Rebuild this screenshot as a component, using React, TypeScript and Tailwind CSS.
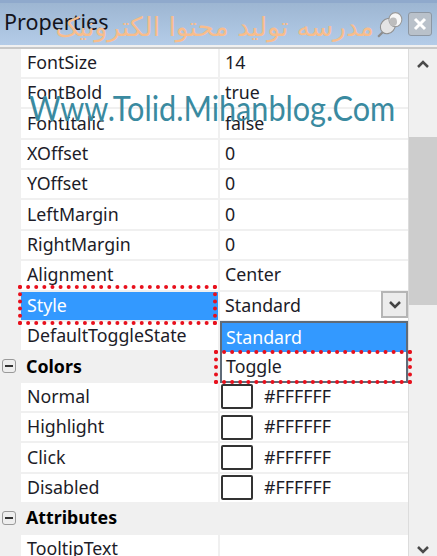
const rowText = "text-[17.8px] text-[#1c1c28] leading-none";

type Row = {
  name: string;
  value?: string;
  swatch?: boolean;
  selected?: boolean;
};

function Cells({ name, value, swatch, selected }: Row) {
  return (
    <div className="flex h-[30.375px] pl-[21px]">
      <div
        className={`flex w-[197px] items-center border-b-2 border-[#f0f0f0] pl-[6px] ${
          selected ? "bg-[#3399ff] text-white" : "bg-white text-[#1c1c28]"
        } text-[17.8px] leading-none`}
      >
        {name}
      </div>
      <div className={`flex flex-1 items-center border-b-2 border-l-2 border-[#f0f0f0] bg-white ${rowText}`}>
        {swatch ? (
          <>
            <span className="ml-[1px] h-[25px] w-[32px] rounded-[2px] border-2 border-[#333333] bg-white" />
            <span className="ml-[11px]">{value}</span>
          </>
        ) : (
          <span className="pl-[5px]">{value}</span>
        )}
      </div>
    </div>
  );
}

function Group({ name }: { name: string }) {
  return (
    <div className="flex h-[30.375px] items-center bg-[#f0f0f0] pb-[2px]">
      <span className="ml-[2px] flex h-[14px] w-[14px] items-center justify-center rounded-[3px] border border-[#9a9a9a] bg-[#eeeeee]">
        <span className="h-[2px] w-[8px] bg-[#333333]" />
      </span>
      <span className="ml-[10px] text-[17.8px] font-bold leading-none text-black">{name}</span>
    </div>
  );
}

function PinIcon() {
  return (
    <svg width="30" height="28" viewBox="0 0 26 26" className="mt-[1px]">
      <path d="M2 24 L9 17" stroke="#8c8c8c" strokeWidth="2" />
      <ellipse cx="11" cy="14" rx="6.5" ry="7.5" transform="rotate(40 11 14)" fill="#e4e4e4" stroke="#8f8f8f" />
      <ellipse cx="18" cy="8" rx="6" ry="6.5" fill="#f7f7f7" stroke="#9a9a9a" />
      <ellipse cx="16" cy="10" rx="3.5" ry="4" fill="#bdbdbd" />
    </svg>
  );
}

export default function App() {
  return (
    <div
      className="relative h-[556px] w-[437px] overflow-hidden bg-[#f0f0f0]"
      style={{ fontFamily: '"Noto Sans", "DejaVu Sans", sans-serif' }}
    >
      <div className="flex h-[45px] items-center border-t-[3px] border-[#8fa9cc] bg-gradient-to-b from-[#9db6d2] to-[#b4cce8] pl-[4px] pr-[5px]">
        <span className="flex-1 pb-[4px] text-[21.5px] leading-none text-[#14141c]">Properties</span>
        <PinIcon />
        <span className="ml-[3px] flex h-[24px] w-[24px] items-center justify-center rounded-[3px] border border-[#8d97a3] bg-[#b9c1ca]">
          <svg width="14" height="14" viewBox="0 0 14 14">
            <path d="M2 2 L12 12 M12 2 L2 12" stroke="#ffffff" strokeWidth="3" />
          </svg>
        </span>
      </div>

      <div className="mt-[1.5px] flex border-t-2 border-[#c8c8c8]">
        <div className="min-w-0 flex-1">
          <Cells name="FontSize" value="14" />
          <Cells name="FontBold" value="true" />
          <Cells name="FontItalic" value="false" />
          <Cells name="XOffset" value="0" />
          <Cells name="YOffset" value="0" />
          <Cells name="LeftMargin" value="0" />
          <Cells name="RightMargin" value="0" />
          <Cells name="Alignment" value="Center" />
          <Cells name="Style" value="Standard" selected />
          <Cells name="DefaultToggleState" />
          <Group name="Colors" />
          <Cells name="Normal" value="#FFFFFF" swatch />
          <Cells name="Highlight" value="#FFFFFF" swatch />
          <Cells name="Click" value="#FFFFFF" swatch />
          <Cells name="Disabled" value="#FFFFFF" swatch />
          <Group name="Attributes" />
          <Cells name="TooltipText" />
        </div>
        <div className="flex h-[508px] w-[29px] flex-col items-center border-l border-[#dcdcdc] bg-[#f0f0f0]">
          <svg width="14" height="10" viewBox="0 0 14 10" className="mt-[10px]">
            <path d="M2 8 L7 3 L12 8" fill="none" stroke="#4a4a4a" strokeWidth="2.5" />
          </svg>
          <div className="mt-[68px] h-[168px] w-full bg-[#cdcdcd]" />
          <svg width="14" height="10" viewBox="0 0 14 10" className="mt-auto mb-[2px]">
            <path d="M2 2 L7 7 L12 2" fill="none" stroke="#4a4a4a" strokeWidth="2.5" />
          </svg>
        </div>
      </div>

      {/* combo button on the Style row */}
      <div className="absolute left-[381px] top-[291px] flex h-[27px] w-[27px] items-center justify-center border-2 border-[#b5b5b5] bg-[#ececec]">
        <svg width="14" height="10" viewBox="0 0 14 10">
          <path d="M2 2 L7 7 L12 2" fill="none" stroke="#444444" strokeWidth="2.5" />
        </svg>
      </div>

      {/* open dropdown */}
      <div className="absolute left-[220px] top-[321px] h-[62px] w-[188px] border-2 border-[#5f6b78] bg-white text-[17.8px] leading-none">
        <div className="flex h-[29px] items-center bg-[#3399ff] pl-[4px] text-white">Standard</div>
        <div className="flex h-[29px] items-center pl-[4px] text-[#1c1c28]">Toggle</div>
      </div>

      {/* red marker boxes */}
      <div className="absolute left-[18px] top-[285px] h-[40px] w-[199px] border-[4px] border-dotted border-[#e8101c]" />
      <div className="absolute left-[214px] top-[350px] h-[34px] w-[198px] border-[4px] border-dotted border-[#e8101c]" />

      {/* watermarks */}
      <div
        dir="rtl"
        className="absolute left-[52px] top-[7px] w-[322px] whitespace-nowrap text-[26.5px] leading-[40px] text-[#f8bd8c]"
        style={{ fontFamily: '"DejaVu Sans", sans-serif' }}
      >
        مدرسه تولید محتوا الکترونیک
      </div>
      <div
        className="absolute left-[29px] top-[87px] origin-left scale-x-[0.875] whitespace-nowrap text-[35px] leading-[40px] text-[#3a8aa0]"
        style={{ fontFamily: 'Lato, sans-serif' }}
      >
        Www.Tolid.Mihanblog.Com
      </div>
    </div>
  );
}
